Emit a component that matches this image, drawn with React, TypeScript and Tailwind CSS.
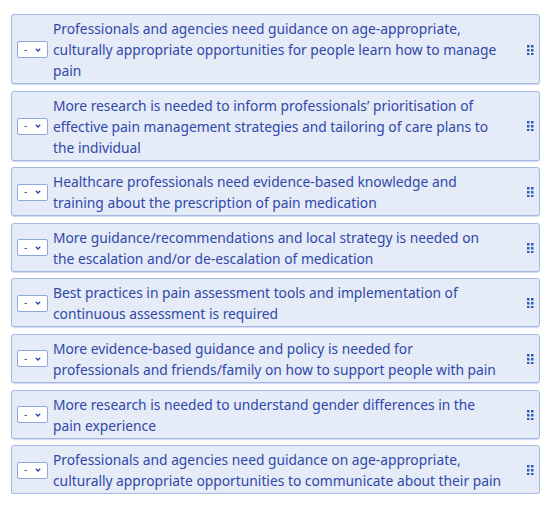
const items: string[][] = [
  [
    "Professionals and agencies need guidance on age-appropriate,",
    "culturally appropriate opportunities for people learn how to manage",
    "pain",
  ],
  [
    "More research is needed to inform professionals\u2019 prioritisation of",
    "effective pain management strategies and tailoring of care plans to",
    "the individual",
  ],
  [
    "Healthcare professionals need evidence-based knowledge and",
    "training about the prescription of pain medication",
  ],
  [
    "More guidance/recommendations and local strategy is needed on",
    "the escalation and/or de-escalation of medication",
  ],
  [
    "Best practices in pain assessment tools and implementation of",
    "continuous assessment is required",
  ],
  [
    "More evidence-based guidance and policy is needed for",
    "professionals and friends/family on how to support people with pain",
  ],
  [
    "More research is needed to understand gender differences in the",
    "pain experience",
  ],
  [
    "Professionals and agencies need guidance on age-appropriate,",
    "culturally appropriate opportunities to communicate about their pain",
  ],
];

function Grip() {
  return (
    <svg width="7" height="10" viewBox="0 0 7 10" className="shrink-0">
      {[0, 4].map((x) =>
        [0, 4, 8].map((y) => (
          <rect key={`${x}-${y}`} x={x} y={y} width="2.5" height="2.5" fill="#2f5bb8" />
        ))
      )}
    </svg>
  );
}

function RankSelect() {
  return (
    <div className="flex h-[17px] w-[31px] shrink-0 items-center justify-between rounded-[2px] border border-[#8ea8dc] bg-white pl-[6px] pr-[6px] text-[10px] leading-none text-[#2f45a6]">
      <span className="-mt-[2px]">-</span>
      <svg width="6" height="4" viewBox="0 0 6 4">
        <path d="M0.8 0.8 L3 3 L5.2 0.8" fill="none" stroke="#2f45a6" strokeWidth="1.3" />
      </svg>
    </div>
  );
}

export default function App() {
  return (
    <div
      className="flex w-[553px] flex-col gap-[6.6px] pl-[11px] pr-[13px] pt-[14px]"
      style={{ fontFamily: '"Noto Sans", "Open Sans", sans-serif' }}
    >
      {items.map((lines, i) => (
        <div
          key={i}
          className="flex items-center rounded-[3px] border border-[#a3b9e4] bg-[#e5ebf7] pb-[2px] pl-[5px] pr-[5px] pt-[3px] shadow-[0_1px_1px_rgba(120,150,210,0.35)]"
        >
          <RankSelect />
          <div className="ml-[5px] flex-1 text-[13.8px] leading-[21px] text-[#3048aa]">
            {lines.map((l, j) => (
              <div key={j} className="whitespace-nowrap">
                {l}
              </div>
            ))}
          </div>
          <Grip />
        </div>
      ))}
    </div>
  );
}
